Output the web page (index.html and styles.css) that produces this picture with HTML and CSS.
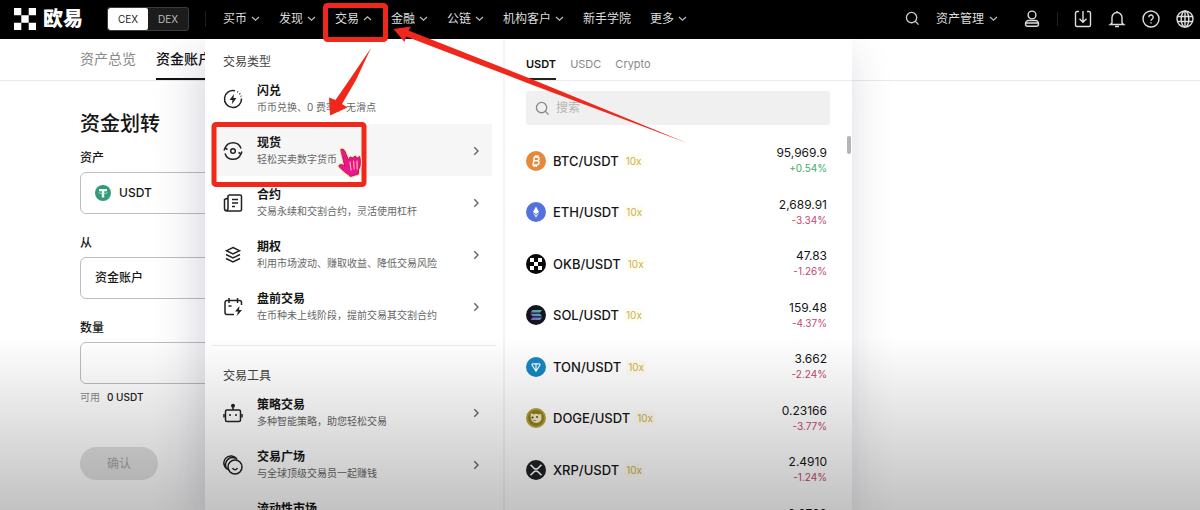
FILE: index.html
```html
<!DOCTYPE html>
<html lang="zh-CN">
<head>
<meta charset="utf-8">
<meta name="viewport" content="width=device-width, initial-scale=1">
<title>资金划转 - 欧易</title>
<link rel="stylesheet" href="styles.css">
</head>
<body>
<svg class="defs" aria-hidden="true">
  <symbol id="down" viewBox="0 0 9 9"><path d="M1 3l3.500 3.200L8 3"/></symbol>
  <symbol id="up" viewBox="0 0 9 9"><path d="M1 6l3.500-3.200L8 6"/></symbol>
  <symbol id="next" viewBox="0 0 10 10"><path d="M3.300 1.200L7 5 3.300 8.800"/></symbol>
  <symbol id="search" viewBox="0 0 16 16"><circle cx="7" cy="7" r="5.500"/><path d="M11 11l3.500 3.500"/></symbol>
</svg>
<header class="topbar">
  <a class="brand" href="#">
    <svg class="brand-mark" viewBox="0 0 22 22"><path d="M0 0h7.300v7.300H0zM14.700 0H22v7.300h-7.300zM7.300 7.300h7.400v7.400H7.300zM0 14.700h7.300V22H0zM14.700 14.700H22V22h-7.300z"/></svg>
    <span>欧易</span>
  </a>
  <div class="switch"><button class="on">CEX</button><button>DEX</button></div>
  <nav class="nav">
    <a href="#">买币<svg class="chev"><use href="#down"/></svg></a>
    <a href="#">发现<svg class="chev"><use href="#down"/></svg></a>
    <a href="#">交易<svg class="chev"><use href="#up"/></svg></a>
    <a href="#">金融<svg class="chev"><use href="#down"/></svg></a>
    <a href="#">公链<svg class="chev"><use href="#down"/></svg></a>
    <a href="#">机构客户<svg class="chev"><use href="#down"/></svg></a>
    <a href="#">新手学院</a>
    <a href="#">更多<svg class="chev"><use href="#down"/></svg></a>
  </nav>
  <div class="tools">
    <button class="tool" aria-label="搜索"><svg class="ico-s"><use href="#search"/></svg></button>
    <a class="assets" href="#">资产管理<svg class="chev"><use href="#down"/></svg></a>
    <button class="tool user" aria-label="用户"><svg class="ico" viewBox="0 0 18 18"><circle cx="9" cy="5" r="3.900"/><path d="M5.500 10.500h7a3 3 0 0 1 3 3v.5a2.200 2.200 0 0 1-2.200 2.200H4.700A2.200 2.200 0 0 1 2.500 14v-.5a3 3 0 0 1 3-3zM3 13h12"/></svg></button>
    <i class="rule"></i>
    <button class="tool" aria-label="下载"><svg class="ico" viewBox="0 0 18 18"><path d="M5 1.500H3A1.500 1.500 0 0 0 1.500 3v12A1.500 1.500 0 0 0 3 16.500h12a1.500 1.500 0 0 0 1.500-1.500V3A1.500 1.500 0 0 0 15 1.500h-2M9 1v11M5.500 8.700L9 12.200l3.500-3.500"/></svg></button>
    <button class="tool" aria-label="通知"><svg class="ico" viewBox="0 0 18 18"><path d="M4 13V7.500a5 5 0 0 1 10 0V13l1.800 1.500H2.200zM7 16.500h4M9 1v1.500"/></svg></button>
    <button class="tool" aria-label="帮助"><svg class="ico" viewBox="0 0 18 18"><circle cx="9" cy="9" r="8"/><path d="M6.800 7.200a2.200 2.200 0 1 1 3.300 1.900c-.8.400-1.100.8-1.100 1.600M9 12.200v1.400"/></svg></button>
    <button class="tool" aria-label="语言"><svg class="ico" viewBox="0 0 18 18"><circle cx="9" cy="9" r="8"/><ellipse cx="9" cy="9" rx="3.800" ry="8"/><path d="M1.500 6.500h15M1.500 11.500h15M9 1v16"/></svg></button>
  </div>
</header>

<main class="page">
  <nav class="subtabs"><a href="#">资产总览</a><a class="active" href="#">资金账户</a></nav>
  <form class="transfer">
    <h1>资金划转</h1>
    <label for="asset">资产</label>
    <button id="asset" class="field" type="button">
      <svg class="coin-s" viewBox="0 0 16 16"><circle cx="8" cy="8" r="8" fill="#36997a"/><path d="M4 4h8v2.200H9.200V12.500H6.800V6.200H4z" fill="#e9fff7"/><path d="M3.500 7.500c0 1.300 9 1.300 9 0" fill="none" stroke="#d4f3e8" stroke-width=".7"/></svg>USDT</button>
    <label for="from">从</label>
    <select id="from" class="field"><option>资金账户</option></select>
    <label for="amount">数量</label>
    <input id="amount" class="field" type="text">
    <p class="avail">可用<b>0 USDT</b></p>
    <button class="confirm" type="button" disabled>确认</button>
  </form>

  <div class="mega">
    <div class="mega-menu">
      <section>
        <h2>交易类型</h2>
        <a class="item" href="#">
          <svg class="glyph" viewBox="0 0 20 20"><path d="M12 1.700A8.500 8.500 0 1 0 18.500 9.500M14.300 2.700l.8.500M16.500 4.400l.6.800M17.900 6.700l.3.800"/><path class="solid" d="M11 5l-4.500 6h3l-.7 4.200L13.500 9h-3z"/></svg>
          <span class="copy"><strong>闪兑</strong><small>币币兑换、0 费率、无滑点</small></span></a>
        <a class="item current" href="#">
          <svg class="glyph" viewBox="0 0 20 20"><circle cx="10" cy="10" r="2.300"/><path d="M2 7.500A8.400 8.400 0 0 1 18 7.500M18 12.500A8.400 8.400 0 0 1 2 12.500M1 9.500l1-2.500 2.500 1.500M19 10.500l-1 2.500-2.500-1.500"/></svg>
          <span class="copy"><strong>现货</strong><small>轻松买卖数字货币</small></span><svg class="go"><use href="#next"/></svg></a>
        <a class="item" href="#">
          <svg class="glyph" viewBox="0 0 20 20"><path d="M6 2h11a1.500 1.500 0 0 1 1.500 1.500v13A1.500 1.500 0 0 1 17 18H4a2.500 2.500 0 0 1-2.500-2.500V6.500L5 5M5 2.500V16a2 2 0 0 1-2 1.500M5 3.500A1.500 1.500 0 0 1 6.500 2M9 6.500h6M9 10h6M9 13.500h3"/></svg>
          <span class="copy"><strong>合约</strong><small>交易永续和交割合约，灵活使用杠杆</small></span><svg class="go"><use href="#next"/></svg></a>
        <a class="item" href="#">
          <svg class="glyph" viewBox="0 0 20 20"><path d="M10 2.500l6.500 3.200L10 9 3.500 5.700zM3 9.500l7 3.500 7-3.500M3 13.500l7 3.500 7-3.500"/></svg>
          <span class="copy"><strong>期权</strong><small>利用市场波动、赚取收益、降低交易风险</small></span><svg class="go"><use href="#next"/></svg></a>
        <a class="item" href="#">
          <svg class="glyph" viewBox="0 0 20 20"><path d="M11 17.500H4A2 2 0 0 1 2 15.500V5.500a2 2 0 0 1 2-2h12.500a2 2 0 0 1 2 2V8M6 1v5M14.500 1v5M5.500 9h3"/><path class="solid" d="M16.500 9l-4.500 5.500h3l-1.200 4.500L19 13h-3z"/></svg>
          <span class="copy"><strong>盘前交易</strong><small>在币种未上线阶段，提前交易其交割合约</small></span><svg class="go"><use href="#next"/></svg></a>
      </section>
      <section>
        <h2>交易工具</h2>
        <a class="item" href="#">
          <svg class="glyph" viewBox="0 0 20 20"><rect x="2.500" y="7" width="15" height="11.500" rx="1.500"/><path d="M10 4v3M1 11v3.500M19 11v3.500M7 11v2M13 11v2"/><circle class="solid" cx="10" cy="2.800" r="2"/></svg>
          <span class="copy"><strong>策略交易</strong><small>多种智能策略，助您轻松交易</small></span><svg class="go"><use href="#next"/></svg></a>
        <a class="item" href="#">
          <svg class="glyph" viewBox="0 0 20 20"><circle cx="12" cy="12" r="7"/><path d="M5.500 14.500A7 7 0 1 1 14 4.500M3 12A7 7 0 0 1 12 3M9.500 13c1 2.200 4 2.200 5 0"/></svg>
          <span class="copy"><strong>交易广场</strong><small>与全球顶级交易员一起赚钱</small></span><svg class="go"><use href="#next"/></svg></a>
        <a class="item" href="#">
          <span class="glyph"></span>
          <span class="copy"><strong>流动性市场</strong><small>大宗交易</small></span><svg class="go"><use href="#next"/></svg></a>
      </section>
    </div>
    <div class="market">
      <div class="quotes"><button class="active">USDT</button><button>USDC</button><button>Crypto</button></div>
      <label class="find"><svg class="ico-s"><use href="#search"/></svg><input type="search" placeholder="搜索" aria-label="搜索"></label>
      <ul class="pairs">
        <li><svg class="coin" viewBox="0 0 20 20"><circle cx="10" cy="10" r="10" fill="#e58a3c"/><path d="M8.500 5.500L7 14.500M8 6h3.200c2.600 0 2.300 3.700-.4 3.700H7.800h3.400c2.800 0 2.200 4.300-.8 4.300H6.500M10 4l-.3 2M12 4.300l-.3 2M8.500 14l-.3 2M10.500 14l-.3 2" fill="none" stroke="#fff" stroke-width="1.500"/></svg><b>BTC/USDT</b><em>10x</em><span class="price">95,969.9<i class="rise">+0.54%</i></span></li>
        <li><svg class="coin" viewBox="0 0 20 20"><circle cx="10" cy="10" r="10" fill="#5472dc"/><path d="M10 4.500l3 5.500L10 12 7 10z" fill="#fff"/><path d="M7 11l3 2 3-2-3 4.800z" fill="#dce3fb"/></svg><b>ETH/USDT</b><em>10x</em><span class="price">2,689.91<i>-3.34%</i></span></li>
        <li><svg class="coin" viewBox="0 0 20 20"><circle cx="10" cy="10" r="10" fill="#080808"/><path d="M4 4h4v4H4zM12 4h4v4h-4zM8 8h4v4H8zM4 12h4v4H4zM12 12h4v4h-4z" fill="#fff"/></svg><b>OKB/USDT</b><em>10x</em><span class="price">47.83<i>-1.26%</i></span></li>
        <li><svg class="coin" viewBox="0 0 20 20"><defs><linearGradient id="sol" x1="0" y1="1" x2="1" y2="0"><stop offset="0" stop-color="#8a55cf"/><stop offset="1" stop-color="#3fc4a5"/></linearGradient></defs><circle cx="10" cy="10" r="10" fill="#15151f"/><path d="M6.500 5H16l-2 2.500H4.500zM4.500 8.800H14l2 2.500H6.500zM6.500 12.600H16l-2 2.500H4.500z" fill="url(#sol)"/></svg><b>SOL/USDT</b><em>10x</em><span class="price">159.48<i>-4.37%</i></span></li>
        <li><svg class="coin" viewBox="0 0 20 20"><circle cx="10" cy="10" r="10" fill="#1786c4"/><path d="M7 6.800h6c1 0 1.200.7.800 1.400L10 14.200 6.200 8.200c-.4-.7-.2-1.400.8-1.400zM10 6.800v7.400" fill="none" stroke="#fff" stroke-width="1.200"/></svg><b>TON/USDT</b><em>10x</em><span class="price">3.662<i>-2.24%</i></span></li>
        <li><svg class="coin" viewBox="0 0 20 20"><circle cx="10" cy="10" r="10" fill="#b3a136"/><circle cx="10" cy="10" r="8" fill="#8f7e22"/><path d="M5 5l2.500 1.500C9 5.500 11 5.500 12.500 6.500L15 6c.5 3 1.200 5-.5 7-2 2.500-6.500 2.500-8.500 0C4.500 11 4.500 8 5 5z" fill="#f0e8bd"/><circle cx="6.500" cy="9.500" r="1.100" fill="#4c401b"/><circle cx="11" cy="9" r=".9" fill="#4c401b"/><path d="M7 12.500h3" stroke="#a8903a"/></svg><b>DOGE/USDT</b><em>10x</em><span class="price">0.23166<i>-3.77%</i></span></li>
        <li><svg class="coin" viewBox="0 0 20 20"><circle cx="10" cy="10" r="10" fill="#202226"/><path d="M4.500 4.800l3.400 3.300c1.300 1.200 2.900 1.200 4.200 0l3.400-3.300M4.500 15.200l3.400-3.300c1.300-1.200 2.900-1.200 4.200 0l3.400 3.300" fill="none" stroke="#fff" stroke-width="1.500"/></svg><b>XRP/USDT</b><em>10x</em><span class="price">2.4910<i>-1.24%</i></span></li>
        <li><svg class="coin" viewBox="0 0 20 20"><circle cx="10" cy="10" r="10" fill="#2f62c8"/></svg><b>ADA/USDT</b><em>10x</em><span class="price">0.9768<i>-2.10%</i></span></li>
      </ul>
      <i class="thumb"></i>
    </div>
  </div>
</main>
<div class="shade"></div>
<svg class="marks" viewBox="0 0 700 200" aria-hidden="true">
  <g fill="none" stroke="#f0281c" stroke-width="5"><rect x="325.500" y="5.500" width="60" height="34" rx="2"/><rect x="214" y="124.500" width="150" height="60" rx="2"/></g>
  <path fill="#f0281c" d="M371 48L350 79 335.500 100 329 97.500 330 115.500 347.500 107.500 342 104 356 80zM393.500 29L411 26.500 408.500 30.500 530 78.500 687 143 526 82.500 406 36.500 404.500 42z"/>
  <g stroke-linejoin="round" stroke-linecap="round">
    <path d="M341 149.500c1.500-1 3 0 4 2l3.500 8.500 1.500-3 3 1 2-2 2.500 2 2-1.500c1 2 1.200 6 .5 10l-1.500 3.500v4l-8 2.500c-3-3-9-6.500-11.500-10 0-2.500 3-2.500 5.500-.5z" fill="#f6e3b4" stroke="#f6e3b4" stroke-width="3"/>
    <path d="M341 149.500c1.500-1 3 0 4 2l3.500 8.500 1.500-3 3 1 2-2 2.500 2 2-1.500c1 2 1.200 6 .5 10l-1.500 3.500v4l-8 2.500c-3-3-9-6.500-11.500-10 0-2.500 3-2.500 5.500-.5z" fill="#ec1590" stroke="#a3103c" stroke-width=".8"/>
    <path d="M350 162l1 8M353.500 161l.7 8M357 161l.2 8" fill="none" stroke="#ffc09a" stroke-width="1.100"/>
  </g>
</svg>
</body>
</html>
```
FILE: styles.css
```css
* { box-sizing: border-box; }
body {
  margin: 0;
  height: 100vh;
  overflow: hidden;
  display: flex;
  flex-direction: column;
  background: #fff;
  color: #161616;
  font: 12px/16px Inter, "Noto Sans CJK SC", sans-serif;
}
a { color: inherit; text-decoration: none; }
button, input, select { font: inherit; color: inherit; border: 0; margin: 0; padding: 0; background: none; }
h1, h2, p, ul { margin: 0; padding: 0; }
i, em { font-style: normal; }
.defs { position: absolute; width: 0; height: 0; }

.topbar {
  flex: none;
  height: 39px;
  display: flex;
  align-items: center;
  padding: 0 6px 2px 14px;
  background: #000;
  color: #ddd;
}
.brand { display: flex; align-items: center; gap: 7px; width: 93px; color: #fff; font-size: 20px; line-height: 24px; font-weight: 900; }
.brand-mark { width: 22px; height: 22px; fill: #fff; }
.switch { display: flex; width: 82px; height: 24px; border: 1px solid #3c3c3c; border-radius: 3px; background: #1c1c1c; overflow: hidden; font-size: 10px; }
.switch button { flex: 1; color: #bbb; }
.switch .on { background: #fff; color: #222; border-radius: 2px; }
.nav { display: flex; gap: 19px; margin-left: 16px; padding-left: 17px; border-left: 1px solid #1c1c1c; white-space: nowrap; }
.nav a, .assets { display: flex; align-items: center; gap: 5px; }
.nav a { gap: 4px; }
.chev { width: 9px; height: 9px; fill: none; stroke: #bbb; stroke-width: 1.2; }
.tools { display: flex; align-items: center; gap: 16px; margin-left: auto; white-space: nowrap; }
.tool { display: flex; }
.ico { width: 18px; height: 18px; fill: none; stroke: #ddd; stroke-width: 1.4; }
.ico-s { width: 15px; height: 15px; fill: none; stroke: #ccc; stroke-width: 1.4; }
.user { margin-left: 9px; }
.rule { width: 1px; height: 14px; background: #222; }

.page { flex: 1; min-height: 0; position: relative; overflow: hidden; }
.subtabs { display: flex; gap: 20px; height: 42px; padding-left: 80px; border-bottom: 1px solid #e9e9e9; font-size: 14px; line-height: 40px; color: #888; }
.subtabs .active { color: #111; font-weight: 500; border-bottom: 2px solid #111; }
.transfer { display: flex; flex-direction: column; width: 400px; padding: 29px 0 0 80px; }
.transfer h1 { font-size: 20px; line-height: 28px; font-weight: 500; margin-bottom: 12px; }
.transfer label { font-weight: 500; line-height: 16px; margin-bottom: 6px; }
.field { display: flex; align-items: center; gap: 8px; height: 42px; padding: 0 14px; margin-bottom: 21px; border: 1px solid #bdbdbd; border-radius: 6px; font-weight: 500; appearance: none; }
.coin-s { width: 16px; height: 16px; }
#amount { margin-bottom: 5px; }
.avail { font-size: 10px; color: #888; }
.avail b { margin-left: 7px; font-weight: 500; color: #222; }
.confirm { width: 78px; height: 33px; margin-top: 42px; border-radius: 17px; background: #e2e2e2; color: #a5a5a5; }

.mega {
  position: absolute;
  top: 0;
  bottom: 0;
  left: 205px;
  width: 647px;
  display: flex;
  background: #fff;
  box-shadow: -6px 16px 44px rgba(40, 40, 80, .2);
}
.mega-menu { flex: 0 0 300px; padding: 0 7px; border-right: 2px solid #f4f4f5; }
.mega-menu section { padding: 13px 0; }
.mega-menu section + section { padding-top: 20px; border-top: 1px solid #ebebeb; }
.mega-menu h2 { padding-left: 11px; font-size: 12px; line-height: 20px; font-weight: 400; color: #444; }
.item { display: flex; align-items: center; height: 52px; margin-right: 4px; padding: 1px 11px 0; }
.current { background: #f6f6f7; }
.glyph { width: 20px; height: 20px; fill: none; stroke: #222; stroke-width: 1.5; }
.solid { fill: #222; stroke: none; }
.copy { flex: 1; display: flex; flex-direction: column; margin-left: 14px; white-space: nowrap; }
.copy strong { font-size: 12px; line-height: 17px; font-weight: 700; }
.copy small { font-size: 10px; line-height: 17px; color: #666; }
.go { width: 10px; height: 10px; fill: none; stroke: #666; stroke-width: 1.4; }

.market { flex: 1; position: relative; }
.quotes { display: flex; gap: 14px; height: 42px; padding-top: 8px; margin-left: 21px; border-bottom: 1px solid #ebebeb; color: #888; font-size: 11px; }
.quotes .active { color: #111; font-weight: 600; border-bottom: 2px solid #222; border-top: 2px solid transparent; }
.find { display: flex; align-items: center; gap: 6px; height: 34px; margin: 10px 22px 10px 21px; padding: 0 9px; border-radius: 3px; background: #f0f0f0; }
.find .ico-s { stroke: #888; }
.find input { flex: 1; outline: 0; }
.find input::placeholder { color: #b5b5b5; opacity: 1; }
.pairs { display: grid; grid-auto-rows: 51px 52px; list-style: none; padding: 0 25px 0 21px; }
.pairs li { display: flex; align-items: center; }
.coin { width: 20px; height: 20px; margin-right: 7px; }
.pairs b { font-size: 13px; font-weight: 500; }
.pairs em { margin-left: 5px; padding: 0 2px; font-size: 10px; line-height: 14px; color: #cbb04a; background: #fffdf2; border-radius: 2px; }
.price { margin-left: auto; display: flex; flex-direction: column; text-align: right; font-size: 12px; }
.price i { font-size: 10px; line-height: 15px; color: #c24a70; }
.price .rise { color: #3dad69; }
.thumb { position: absolute; top: 97px; right: 1px; width: 4px; height: 18px; border-radius: 2px; background: #b4b4b6; }

.shade { position: fixed; left: 0; right: 0; bottom: 0; height: 34vh; background: linear-gradient(rgba(0, 0, 0, 0), rgba(0, 0, 0, .24)); pointer-events: none; }
.marks { position: absolute; left: 0; top: 0; width: 700px; height: 200px; pointer-events: none; }
```
